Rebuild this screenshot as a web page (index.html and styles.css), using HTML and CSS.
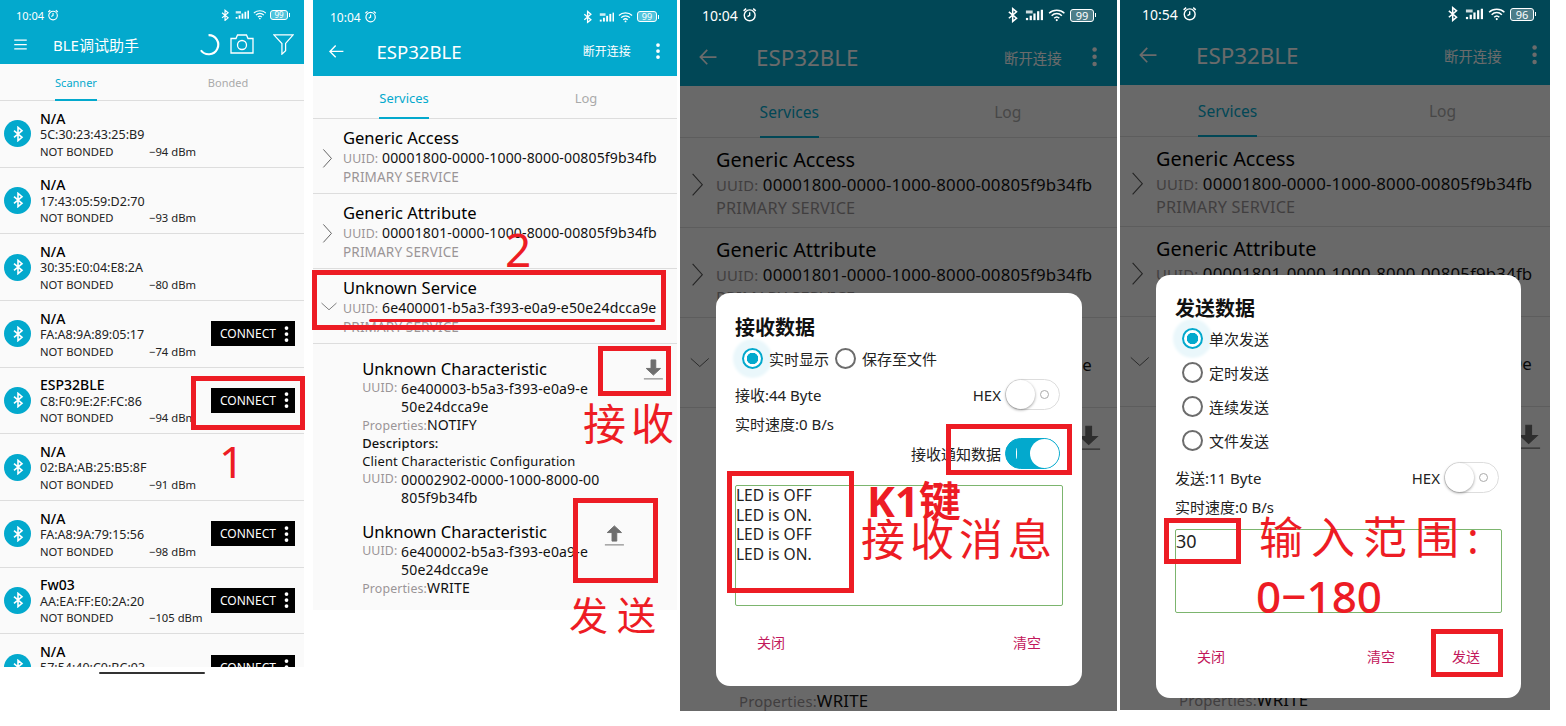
FILE: index.html
```html
<!DOCTYPE html>
<html lang="zh-CN">
<head>
  <meta charset="UTF-8">
  <title>BLE调试助手</title>
  <link rel="stylesheet" href="styles.css">
</head>
<body>

<svg class="sprites" width="0" height="0">
  <symbol id="i-bt" viewBox="0 0 24 24"><path d="M6 7l12 10-6 5V2l6 5L6 17" fill="none" stroke="currentColor" stroke-width="2.4"/></symbol>
  <symbol id="i-alarm" viewBox="0 0 24 24"><g fill="none" stroke="currentColor" stroke-width="2.2"><circle cx="12" cy="13" r="8.5"/><path d="M12 8v5l-3.500 2M2.500 6L6.500 2.500M21.500 6L17.500 2.500"/></g></symbol>
  <symbol id="i-signal" viewBox="0 0 24 16"><g fill="currentColor"><rect x="1" y="12" width="3" height="3"/><rect x="6" y="9" width="3" height="6"/><rect x="11" y="6" width="3" height="9"/><rect x="16" y="3" width="3" height="12"/><rect x="21" y="1" width="3" height="14"/><rect x="1" y="2" width="9" height="4" opacity=".8"/></g></symbol>
  <symbol id="i-wifi" viewBox="0 0 24 18"><g fill="none" stroke="currentColor" stroke-width="2"><path d="M1.500 6.500C7 1 17 1 22.500 6.500M5 10c4-4 10-4 14 0M8.500 13.500c2-2 5-2 7 0"/></g><circle cx="12" cy="16" r="1.500" fill="currentColor"/></symbol>
  <symbol id="i-menu" viewBox="0 0 24 24"><path d="M2 5h20M2 12h20M2 19h20" stroke="currentColor" stroke-width="2"/></symbol>
  <symbol id="i-spin" viewBox="0 0 24 24"><path d="M11 2.200A10 10 0 1 1 3 18" fill="none" stroke="currentColor" stroke-width="2.200"/></symbol>
  <symbol id="i-camera" viewBox="0 0 24 20"><g fill="none" stroke="currentColor" stroke-width="1.300"><path d="M1 4.500h5L7.500 1h9L18 4.500h5V19H1z"/><circle cx="12" cy="11" r="4.500"/></g></symbol>
  <symbol id="i-filter" viewBox="0 0 20 20"><path d="M.8.800h18.400L12 9v7l-3.500 3.200V9z" fill="none" stroke="currentColor" stroke-width="1.200"/></symbol>
  <symbol id="i-back" viewBox="0 0 24 24"><path d="M22 12H3M11 3.500L2.800 12l8.200 8.500" fill="none" stroke="currentColor" stroke-width="2"/></symbol>
  <symbol id="i-dots" viewBox="0 0 6 24"><g fill="currentColor"><circle cx="3" cy="4" r="2.500"/><circle cx="3" cy="12" r="2.500"/><circle cx="3" cy="20" r="2.500"/></g></symbol>
  <symbol id="i-right" viewBox="0 0 12 24"><path d="M1.500 2l9 10-9 10" fill="none" stroke="currentColor" stroke-width="1"/></symbol>
  <symbol id="i-down" viewBox="0 0 24 12"><path d="M2 1.500l10 9 10-9" fill="none" stroke="currentColor" stroke-width="1"/></symbol>
  <symbol id="i-dl" viewBox="0 0 24 24"><path d="M9.500 2h5v9h5L12 18 4.500 11h5zM2 22h20" fill="currentColor" stroke="currentColor" stroke-width="1"/></symbol>
  <symbol id="i-ul" viewBox="0 0 24 24"><path d="M9.500 18h5V9h5L12 2 4.500 9h5zM2 22h20" fill="currentColor" stroke="currentColor" stroke-width="1"/></symbol>
</svg>

<div class="screens">

  <!-- scanner -->
  <section class="phone phone-scan">
    <header class="toolbar">
      <div class="status">
        <span class="time">10:04</span>
        <svg class="st-alarm"><use href="#i-alarm"/></svg>
        <span class="status-right">
          <svg class="st-bt"><use href="#i-bt"/></svg>
          <svg class="st-signal"><use href="#i-signal"/></svg>
          <svg class="st-wifi"><use href="#i-wifi"/></svg>
          <span class="battery">99</span>
        </span>
      </div>
      <div class="nav">
        <svg class="nav-menu"><use href="#i-menu"/></svg>
        <span class="nav-title">BLE调试助手</span>
        <svg class="nav-spin"><use href="#i-spin"/></svg>
        <svg class="nav-camera"><use href="#i-camera"/></svg>
        <svg class="nav-filter"><use href="#i-filter"/></svg>
      </div>
    </header>
    <nav class="tabs">
      <div class="tab active"><span>Scanner</span></div>
      <div class="tab"><span>Bonded</span></div>
    </nav>
    <div class="devices">
      <div class="device">
        <span class="bt-badge"><svg><use href="#i-bt"/></svg></span>
        <div class="device-info"><b>N/A</b><span>5C:30:23:43:25:B9</span><span class="meta"><i>NOT BONDED</i><i>−94 dBm</i></span></div>
      </div>
      <div class="device">
        <span class="bt-badge"><svg><use href="#i-bt"/></svg></span>
        <div class="device-info"><b>N/A</b><span>17:43:05:59:D2:70</span><span class="meta"><i>NOT BONDED</i><i>−93 dBm</i></span></div>
      </div>
      <div class="device">
        <span class="bt-badge"><svg><use href="#i-bt"/></svg></span>
        <div class="device-info"><b>N/A</b><span>30:35:E0:04:E8:2A</span><span class="meta"><i>NOT BONDED</i><i>−80 dBm</i></span></div>
      </div>
      <div class="device">
        <span class="bt-badge"><svg><use href="#i-bt"/></svg></span>
        <div class="device-info"><b>N/A</b><span>FA:A8:9A:89:05:17</span><span class="meta"><i>NOT BONDED</i><i>−74 dBm</i></span></div>
        <div class="connect">CONNECT<svg><use href="#i-dots"/></svg></div>
      </div>
      <div class="device">
        <span class="bt-badge"><svg><use href="#i-bt"/></svg></span>
        <div class="device-info"><b>ESP32BLE</b><span>C8:F0:9E:2F:FC:86</span><span class="meta"><i>NOT BONDED</i><i>−94 dBm</i></span></div>
        <div class="connect">CONNECT<svg><use href="#i-dots"/></svg></div>
      </div>
      <div class="device">
        <span class="bt-badge"><svg><use href="#i-bt"/></svg></span>
        <div class="device-info"><b>N/A</b><span>02:BA:AB:25:B5:8F</span><span class="meta"><i>NOT BONDED</i><i>−91 dBm</i></span></div>
      </div>
      <div class="device">
        <span class="bt-badge"><svg><use href="#i-bt"/></svg></span>
        <div class="device-info"><b>N/A</b><span>FA:A8:9A:79:15:56</span><span class="meta"><i>NOT BONDED</i><i>−98 dBm</i></span></div>
        <div class="connect">CONNECT<svg><use href="#i-dots"/></svg></div>
      </div>
      <div class="device">
        <span class="bt-badge"><svg><use href="#i-bt"/></svg></span>
        <div class="device-info"><b>Fw03</b><span>AA:EA:FF:E0:2A:20</span><span class="meta"><i>NOT BONDED</i><i>−105 dBm</i></span></div>
        <div class="connect">CONNECT<svg><use href="#i-dots"/></svg></div>
      </div>
      <div class="device">
        <span class="bt-badge"><svg><use href="#i-bt"/></svg></span>
        <div class="device-info"><b>N/A</b><span>57:54:40:C0:BC:93</span><span class="meta"><i>NOT BONDED</i><i>−99 dBm</i></span></div>
        <div class="connect">CONNECT<svg><use href="#i-dots"/></svg></div>
      </div>
    </div>
    <div class="gesture"><span></span></div>

    <div class="mark box-connect"></div>
    <div class="note note-1">1</div>
  </section>

  <!-- services -->
  <section class="phone phone-svc">
    <header class="toolbar">
      <div class="status">
        <span class="time">10:04</span>
        <svg class="st-alarm"><use href="#i-alarm"/></svg>
        <span class="status-right">
          <svg class="st-bt"><use href="#i-bt"/></svg>
          <svg class="st-signal"><use href="#i-signal"/></svg>
          <svg class="st-wifi"><use href="#i-wifi"/></svg>
          <span class="battery">99</span>
        </span>
      </div>
      <div class="nav">
        <svg class="nav-back"><use href="#i-back"/></svg>
        <span class="nav-title">ESP32BLE</span>
        <span class="nav-action">断开连接</span>
        <svg class="nav-dots"><use href="#i-dots"/></svg>
      </div>
    </header>
    <nav class="tabs">
      <div class="tab active"><span>Services</span></div>
      <div class="tab"><span>Log</span></div>
    </nav>
    <div class="services">
      <div class="service">
        <svg class="chev"><use href="#i-right"/></svg>
        <div><h3>Generic Access</h3><p><em>UUID:</em> 00001800-0000-1000-8000-00805f9b34fb</p><p class="kind">PRIMARY SERVICE</p></div>
      </div>
      <div class="service">
        <svg class="chev"><use href="#i-right"/></svg>
        <div><h3>Generic Attribute</h3><p><em>UUID:</em> 00001801-0000-1000-8000-00805f9b34fb</p><p class="kind">PRIMARY SERVICE</p></div>
      </div>
      <div class="service">
        <svg class="chev-open"><use href="#i-down"/></svg>
        <div><h3>Unknown Service</h3><p><em>UUID:</em> 6e400001-b5a3-f393-e0a9-e50e24dcca9e</p><p class="kind">PRIMARY SERVICE</p></div>
      </div>
      <div class="chars">
        <div class="char">
          <div class="char-text">
            <h3>Unknown Characteristic</h3>
            <p class="uuid"><em>UUID:</em><span>6e400003-b5a3-f393-e0a9-e<br>50e24dcca9e</span></p>
            <p><em>Properties:</em>NOTIFY</p>
            <p class="desc-head">Descriptors:</p>
            <p>Client Characteristic Configuration</p>
            <p class="uuid"><em>UUID:</em><span>00002902-0000-1000-8000-00<br>805f9b34fb</span></p>
          </div>
          <svg class="char-dl"><use href="#i-dl"/></svg>
        </div>
        <div class="char">
          <div class="char-text">
            <h3>Unknown Characteristic</h3>
            <p class="uuid"><em>UUID:</em><span>6e400002-b5a3-f393-e0a9-e<br>50e24dcca9e</span></p>
            <p><em>Properties:</em>WRITE</p>
          </div>
          <svg class="char-ul"><use href="#i-ul"/></svg>
        </div>
      </div>
    </div>

    <div class="mark box-service"></div>
    <div class="underline"></div>
    <div class="note note-2">2</div>
    <div class="mark box-read"></div>
    <div class="note note-read">接收</div>
    <div class="mark box-write"></div>
    <div class="note note-write">发送</div>
  </section>

  <!-- receive dialog -->
  <section class="phone phone-svc phone-dim phone-rx">
    <header class="toolbar">
      <div class="status">
        <span class="time">10:04</span>
        <svg class="st-alarm"><use href="#i-alarm"/></svg>
        <span class="status-right">
          <svg class="st-bt"><use href="#i-bt"/></svg>
          <svg class="st-signal"><use href="#i-signal"/></svg>
          <svg class="st-wifi"><use href="#i-wifi"/></svg>
          <span class="battery">99</span>
        </span>
      </div>
      <div class="nav">
        <svg class="nav-back"><use href="#i-back"/></svg>
        <span class="nav-title">ESP32BLE</span>
        <span class="nav-action">断开连接</span>
        <svg class="nav-dots"><use href="#i-dots"/></svg>
      </div>
    </header>
    <nav class="tabs">
      <div class="tab active"><span>Services</span></div>
      <div class="tab"><span>Log</span></div>
    </nav>
    <div class="services">
      <div class="service">
        <svg class="chev"><use href="#i-right"/></svg>
        <div><h3>Generic Access</h3><p><em>UUID:</em> 00001800-0000-1000-8000-00805f9b34fb</p><p class="kind">PRIMARY SERVICE</p></div>
      </div>
      <div class="service">
        <svg class="chev"><use href="#i-right"/></svg>
        <div><h3>Generic Attribute</h3><p><em>UUID:</em> 00001801-0000-1000-8000-00805f9b34fb</p><p class="kind">PRIMARY SERVICE</p></div>
      </div>
      <div class="service">
        <svg class="chev-open"><use href="#i-down"/></svg>
        <div><h3>Unknown Service</h3><p><em>UUID:</em> 6e400001-b5a3-f393-e0a9-e50e24dcca9e</p><p class="kind">PRIMARY SERVICE</p></div>
      </div>
      <div class="chars">
        <div class="char">
          <div class="char-text">
            <h3>Unknown Characteristic</h3>
            <p class="uuid"><em>UUID:</em><span>6e400003-b5a3-f393-e0a9-e<br>50e24dcca9e</span></p>
            <p><em>Properties:</em>NOTIFY</p>
            <p class="desc-head">Descriptors:</p>
            <p>Client Characteristic Configuration</p>
            <p class="uuid"><em>UUID:</em><span>00002902-0000-1000-8000-00<br>805f9b34fb</span></p>
          </div>
          <svg class="char-dl"><use href="#i-dl"/></svg>
        </div>
        <div class="char">
          <div class="char-text">
            <h3>Unknown Characteristic</h3>
            <p class="uuid"><em>UUID:</em><span>6e400002-b5a3-f393-e0a9-e<br>50e24dcca9e</span></p>
            <p><em>Properties:</em>WRITE</p>
          </div>
          <svg class="char-ul"><use href="#i-ul"/></svg>
        </div>
      </div>
    </div>
    <div class="scrim"></div>

    <div class="dialog">
      <h2>接收数据</h2>
      <div class="radio-row">
        <span class="radio on"></span><label>实时显示</label>
        <span class="radio"></span><label>保存至文件</label>
      </div>
      <div class="info-row">
        <span>接收:44 Byte</span>
        <span class="hex">HEX<span class="switch"></span></span>
      </div>
      <div class="speed">实时速度:0 B/s</div>
      <div class="notify-row">接收通知数据<span class="switch on"></span></div>
      <div class="data-box data-rx">LED is OFF<br>LED is ON.<br>LED is OFF<br>LED is ON.</div>
      <div class="actions"><span>关闭</span><span class="push">清空</span></div>
    </div>

    <div class="mark box-toggle"></div>
    <div class="mark box-log"></div>
    <div class="note note-k1">K1键</div>
    <div class="note note-msg">接收消息</div>
  </section>

  <!-- send dialog -->
  <section class="phone phone-svc phone-dim phone-tx">
    <header class="toolbar">
      <div class="status">
        <span class="time">10:54</span>
        <svg class="st-alarm"><use href="#i-alarm"/></svg>
        <span class="status-right">
          <svg class="st-bt"><use href="#i-bt"/></svg>
          <svg class="st-signal"><use href="#i-signal"/></svg>
          <svg class="st-wifi"><use href="#i-wifi"/></svg>
          <span class="battery">96</span>
        </span>
      </div>
      <div class="nav">
        <svg class="nav-back"><use href="#i-back"/></svg>
        <span class="nav-title">ESP32BLE</span>
        <span class="nav-action">断开连接</span>
        <svg class="nav-dots"><use href="#i-dots"/></svg>
      </div>
    </header>
    <nav class="tabs">
      <div class="tab active"><span>Services</span></div>
      <div class="tab"><span>Log</span></div>
    </nav>
    <div class="services">
      <div class="service">
        <svg class="chev"><use href="#i-right"/></svg>
        <div><h3>Generic Access</h3><p><em>UUID:</em> 00001800-0000-1000-8000-00805f9b34fb</p><p class="kind">PRIMARY SERVICE</p></div>
      </div>
      <div class="service">
        <svg class="chev"><use href="#i-right"/></svg>
        <div><h3>Generic Attribute</h3><p><em>UUID:</em> 00001801-0000-1000-8000-00805f9b34fb</p><p class="kind">PRIMARY SERVICE</p></div>
      </div>
      <div class="service">
        <svg class="chev-open"><use href="#i-down"/></svg>
        <div><h3>Unknown Service</h3><p><em>UUID:</em> 6e400001-b5a3-f393-e0a9-e50e24dcca9e</p><p class="kind">PRIMARY SERVICE</p></div>
      </div>
      <div class="chars">
        <div class="char">
          <div class="char-text">
            <h3>Unknown Characteristic</h3>
            <p class="uuid"><em>UUID:</em><span>6e400003-b5a3-f393-e0a9-e<br>50e24dcca9e</span></p>
            <p><em>Properties:</em>NOTIFY</p>
            <p class="desc-head">Descriptors:</p>
            <p>Client Characteristic Configuration</p>
            <p class="uuid"><em>UUID:</em><span>00002902-0000-1000-8000-00<br>805f9b34fb</span></p>
          </div>
          <svg class="char-dl"><use href="#i-dl"/></svg>
        </div>
        <div class="char">
          <div class="char-text">
            <h3>Unknown Characteristic</h3>
            <p class="uuid"><em>UUID:</em><span>6e400002-b5a3-f393-e0a9-e<br>50e24dcca9e</span></p>
            <p><em>Properties:</em>WRITE</p>
          </div>
          <svg class="char-ul"><use href="#i-ul"/></svg>
        </div>
      </div>
    </div>
    <div class="scrim"></div>

    <div class="dialog">
      <h2>发送数据</h2>
      <div class="radio-col">
        <div><span class="radio on"></span><label>单次发送</label></div>
        <div><span class="radio"></span><label>定时发送</label></div>
        <div><span class="radio"></span><label>连续发送</label></div>
        <div><span class="radio"></span><label>文件发送</label></div>
      </div>
      <div class="info-row">
        <span>发送:11 Byte</span>
        <span class="hex">HEX<span class="switch"></span></span>
      </div>
      <div class="speed">实时速度:0 B/s</div>
      <div class="data-box data-tx">30</div>
      <div class="actions"><span>关闭</span><span class="push">清空</span><span class="send">发送</span></div>
    </div>

    <div class="mark box-input"></div>
    <div class="mark box-send"></div>
    <div class="note note-range">输入范围:</div>
    <div class="note note-nums">0−180</div>
  </section>

</div>

</body>
</html>
```

FILE: styles.css
```css
html, body {
  margin: 0;
  padding: 0;
  background: #fff;
}

body {
  font-family: "Noto Sans", "Noto Sans CJK SC", sans-serif;
  color: #111;
}

h2, h3, p {
  margin: 0;
  font-weight: 400;
}

em, i {
  font-style: normal;
}

.sprites {
  position: absolute;
}

.screens {
  display: flex;
  align-items: flex-start;
  padding-bottom: 15px;
}

/* ---- phones ---- */

.phone {
  position: relative;
  display: flex;
  flex-direction: column;
  flex: none;
  background: #fafafa;
}

.phone-scan {
  width: 304px;
  margin-right: 9px;
  background: #fff;
}

.phone-svc {
  width: 364px;
  height: 610px;
  font-size: 12px;
}

.phone-dim {
  font-size: 14.4px;
  margin-left: 3px;
  overflow: hidden;
}

.phone-rx {
  width: 437px;
  height: 711px;
}

.phone-tx {
  width: 430px;
  height: 710px;
}

/* ---- toolbar ---- */

.toolbar {
  flex: none;
  background: #03a9cd;
  color: #fff;
}

.phone-scan .toolbar { height: 64px; }
.phone-svc .toolbar { height: 76px; }
.phone-rx .toolbar { height: 86px; }
.phone-tx .toolbar { height: 85px; }

.status {
  position: relative;
  z-index: 3;
  display: flex;
  align-items: center;
  color: #fff;
}

.phone-scan .status { height: 30px; padding: 0 16px 0 16px; font-size: 11px; }
.phone-svc .status { height: 34px; padding: 0 20px 0 17px; font-size: 12px; }
.phone-rx .status { height: 30px; padding: 0 23px 0 22px; font-size: 14px; }
.phone-tx .status { height: 28px; padding: 0 16px 0 22px; font-size: 14px; }

.st-alarm {
  width: 1.1em;
  height: 1.1em;
  margin-left: .3em;
}

.status-right {
  display: flex;
  align-items: center;
  gap: .33em;
  margin-left: auto;
}

.st-bt { width: 1.1em; height: 1.15em; }
.st-signal { width: 1.3em; height: .85em; }
.st-wifi { width: 1.25em; height: 1em; }

.battery {
  position: relative;
  width: 2em;
  height: 1em;
  line-height: 1em;
  box-sizing: content-box;
  border: 1px solid #fff;
  border-radius: 3px;
  background: rgba(255, 255, 255, .3);
  text-align: center;
}

.battery::after {
  content: "";
  position: absolute;
  right: -3px;
  top: 30%;
  width: 1px;
  height: 40%;
  background: #fff;
}

.phone-scan .battery { font-size: 8px; }
.phone-svc .battery { font-size: 9px; }
.phone-dim .battery { font-size: 11px; }

.nav {
  display: flex;
  align-items: center;
}

.phone-scan .nav { height: 28px; }
.phone-svc .nav { height: 34px; }
.phone-rx .nav, .phone-tx .nav { height: 54px; }
.phone-tx .nav { margin-right: -7px; }

.nav-menu { width: 15px; height: 15px; margin-left: 13px; flex: none; }

.phone-scan .nav-title {
  margin-left: 25px;
  font-size: 15px;
}

.nav-spin { width: 23px; height: 23px; margin-left: auto; }
.nav-camera { width: 24px; height: 20px; margin-left: 9px; }
.nav-filter { width: 21px; height: 21px; margin: 0 10px 0 19px; }

.nav-back { width: 1.4em; height: 1.4em; margin-left: 1.25em; flex: none; }

.phone-svc .nav-title {
  margin-left: 1.7em;
  font-size: 1.55em;
}

.nav-action { margin-left: auto; font-size: 1em; }
.nav-dots { width: .5em; height: 1.5em; margin: 0 1.3em 0 2.05em; flex: none; }

/* ---- tabs ---- */

.tabs {
  flex: none;
  display: flex;
  height: 37px;
  border-bottom: 1px solid #ddd;
  background: #fafafa;
  color: #aaa;
  font-size: 11px;
  box-sizing: border-box;
}

.phone-svc .tabs {
  height: 3.6em;
  font-size: 1em;
}

.tab {
  flex: 1;
  display: flex;
  justify-content: center;
}

.tab span {
  display: flex;
  align-items: center;
  box-sizing: border-box;
  padding-top: 2px;
  border-bottom: 2px solid transparent;
  margin-bottom: -1px;
}

.phone-svc .tab span {
  font-size: 1.08em;
}

.tab.active span {
  color: #03a9cd;
  border-bottom-color: #03a9cd;
}

/* ---- scanner list ---- */

.devices {
  height: 566px;
  overflow: hidden;
}

.device {
  display: flex;
  align-items: center;
  height: 66.67px;
  box-sizing: border-box;
  background: #fafafa;
  border-bottom: 1px solid #ddd;
}

.bt-badge {
  flex: none;
  display: flex;
  align-items: center;
  justify-content: center;
  width: 27px;
  height: 27px;
  margin-left: 4px;
  border-radius: 50%;
  background: #03a9cd;
  color: #fff;
}

.bt-badge svg {
  width: 16px;
  height: 16px;
}

.device-info {
  display: flex;
  flex-direction: column;
  margin: 3px 0 0 9px;
  font-size: 12.5px;
  line-height: 16.5px;
  color: #222;
}

.device-info b {
  font-size: 14px;
  font-weight: 500;
  color: #000;
}

.meta {
  display: flex;
  white-space: nowrap;
}

.meta i {
  font-size: 11.25px;
}

.meta i:first-child {
  width: 109px;
}

.connect {
  flex: none;
  display: flex;
  align-items: center;
  justify-content: space-between;
  width: 84px;
  height: 25px;
  box-sizing: border-box;
  padding: 0 6px 0 9px;
  margin-left: auto;
  margin-right: 9px;
  background: #000;
  color: #fff;
  font-size: 12px;
}

.connect svg {
  width: 5px;
  height: 18px;
}

.gesture {
  height: 8px;
  display: flex;
  align-items: center;
  justify-content: center;
}

.gesture span {
  width: 106px;
  height: 2px;
  margin-top: 3px;
  background: #333;
  border-radius: 2px;
}

/* ---- services list ---- */

.services {
  flex: 1;
  min-height: 0;
  background: #fafafa;
}

.service {
  display: flex;
  align-items: center;
  height: 6.25em;
  box-sizing: border-box;
  border-bottom: 1px solid #ddd;
}

.service h3, .char h3 {
  font-size: 1.38em;
  line-height: 1.4;
  color: #000;
}

.service p, .char p {
  font-size: 1.17em;
  line-height: 1.29;
  letter-spacing: .01em;
  white-space: nowrap;
}

.service em, .char em, .kind {
  color: #9a9597;
}

.service em, .char em {
  font-size: .88em;
}

.service .kind {
  font-size: 1.13em;
  margin-top: .12em;
}

.chev {
  flex: none;
  width: .9em;
  height: 1.9em;
  margin: .3em .85em 0 .75em;
  color: #555;
}

.chev-open {
  flex: none;
  width: 1.5em;
  height: .9em;
  margin: 0 .4em 0 .6em;
  color: #555;
}

.chars {
  padding-top: 1.05em;
}

.char {
  display: flex;
  align-items: flex-start;
  padding-left: 4.1em;
  margin-bottom: 1.1em;
}

.uuid {
  display: flex;
}

.uuid em {
  width: 3.15em;
  flex: none;
}

.char-text {
  width: 22em;
}

.char .desc-head, .char .desc-head + p {
  font-size: 1.08em;
  line-height: 1.4;
}

.desc-head {
  font-weight: 500;
}

.char-dl, .char-ul {
  flex: none;
  width: 1.9em;
  height: 1.9em;
  color: #6e6e6e;
}

.char-dl { margin-left: 1.3em; margin-top: .1em; }
.char-ul { margin-left: -1.95em; margin-top: .3em; }

/* ---- dialogs ---- */

.scrim {
  position: absolute;
  inset: 0;
  z-index: 2;
  background: rgba(0, 0, 0, .58);
}

.dialog {
  position: absolute;
  z-index: 3;
  display: flex;
  flex-direction: column;
  box-sizing: border-box;
  padding: 20px 19px 0;
  background: #fff;
  border-radius: 14px;
  font-size: 15px;
  color: #222;
}

.phone-rx .dialog { left: 36px; top: 293px; width: 366px; height: 393px; padding-top: 21px; }
.phone-tx .dialog { left: 36px; top: 275px; width: 365px; height: 423px; }

.dialog h2 {
  height: 28px;
  line-height: 28px;
  font-size: 20px;
  font-weight: 700;
  color: #111;
}

.radio {
  flex: none;
  width: 21px;
  height: 21px;
  box-sizing: border-box;
  border: 2px solid #6c6c6c;
  border-radius: 50%;
}

.radio.on {
  border-color: #03a9cd;
  background: radial-gradient(circle, #03a9cd 0 5.5px, #fff 6px);
  box-shadow: 0 0 3px 9px #eaf7fb;
}

.radio-row {
  display: flex;
  align-items: center;
  gap: 6px;
  height: 22px;
  margin: 5px 0 0 7px;
}

.radio-col {
  display: flex;
  flex-direction: column;
  margin: -2px 0 0 7px;
}

.radio-col div {
  display: flex;
  align-items: center;
  gap: 6px;
  height: 34px;
}

.info-row {
  display: flex;
  align-items: center;
  justify-content: space-between;
  height: 31px;
  margin-top: 10px;
  padding-right: 3px;
}

.phone-tx .info-row { margin-top: 5px; }

.hex {
  display: flex;
  align-items: center;
  gap: 4px;
}

.switch {
  position: relative;
  display: inline-block;
  width: 55px;
  height: 31px;
  box-sizing: border-box;
  border: 1px solid #ddd;
  border-radius: 16px;
  background: #fff;
}

.switch::before {
  content: "";
  position: absolute;
  left: 0;
  top: 0;
  width: 29px;
  height: 29px;
  border-radius: 50%;
  background: #fff;
  box-shadow: 0 1px 3px rgba(0, 0, 0, .4);
}

.switch::after {
  content: "";
  position: absolute;
  right: 10px;
  top: 10px;
  width: 9px;
  height: 9px;
  box-sizing: border-box;
  border: 1.5px solid #aaa;
  border-radius: 50%;
}

.switch.on {
  background: #03a9cd;
  border-color: #03a9cd;
}

.switch.on::before {
  left: 24px;
  box-shadow: none;
}

.switch.on::after {
  left: 10px;
  top: 9px;
  right: auto;
  width: 1px;
  height: 11px;
  border: 0;
  background: #fff;
}

.speed {
  height: 20px;
  line-height: 20px;
  margin-top: 4px;
}

.notify-row {
  display: flex;
  align-items: center;
  justify-content: flex-end;
  gap: 4px;
  height: 31px;
  margin-top: 4px;
  padding-right: 3px;
}

.data-box {
  box-sizing: border-box;
  border: 1px solid #7cb56e;
  border-radius: 2px;
  background: #fff;
  color: #222;
}

.data-rx {
  height: 121px;
  margin-top: 16px;
  font-size: 15.5px;
  line-height: 19.7px;
}

.data-tx {
  height: 84px;
  margin-top: 12px;
  font-size: 18px;
  line-height: 22px;
}

.actions {
  display: flex;
  height: 20px;
  line-height: 20px;
  padding: 0 22px;
  font-size: 14px;
  color: #c2185b;
}

.phone-rx .actions { margin-top: 27px; }
.phone-tx .actions { margin-top: 34px; }

.push { margin-left: auto; }
.send { margin-left: 57px; }

/* ---- red annotations ---- */

.mark {
  position: absolute;
  z-index: 5;
  box-sizing: border-box;
  border: 5px solid #ed1c24;
}

.note {
  position: absolute;
  z-index: 5;
  color: #ed1c24;
  line-height: 1;
  white-space: nowrap;
}

.box-connect { left: 191px; top: 376px; width: 114px; height: 54px; }
.note-1 { left: 219px; top: 439px; font-size: 44px; }

.box-service { left: -1px; top: 270px; width: 354px; height: 60px; }
.underline {
  position: absolute;
  z-index: 5;
  left: 56px;
  top: 319px;
  width: 286px;
  height: 3px;
  border-radius: 2px;
  background: #ed1c24;
}
.note-2 { left: 192px; top: 226px; font-size: 46px; }
.box-read { left: 285px; top: 346px; width: 73px; height: 50px; }
.note-read { left: 270px; top: 402px; font-size: 43px; letter-spacing: 5px; }
.box-write { left: 260px; top: 498px; width: 85px; height: 85px; }
.note-write { left: 256px; top: 595px; font-size: 39px; letter-spacing: 9px; }

.box-toggle { left: 266px; top: 424px; width: 126px; height: 51px; }
.box-log { left: 47px; top: 471px; width: 127px; height: 122px; }
.note-k1 { left: 187px; top: 480px; font-size: 42px; font-weight: 700; }
.note-msg { left: 181px; top: 517px; font-size: 44px; letter-spacing: 5px; }

.box-input { left: 44px; top: 518px; width: 77px; height: 46px; }
.box-send { left: 311px; top: 629px; width: 72px; height: 48px; }
.note-range { left: 139px; top: 515px; font-size: 44px; letter-spacing: 8px; }
.note-nums { left: 136px; top: 574px; font-size: 44px; font-weight: 500; }
```
